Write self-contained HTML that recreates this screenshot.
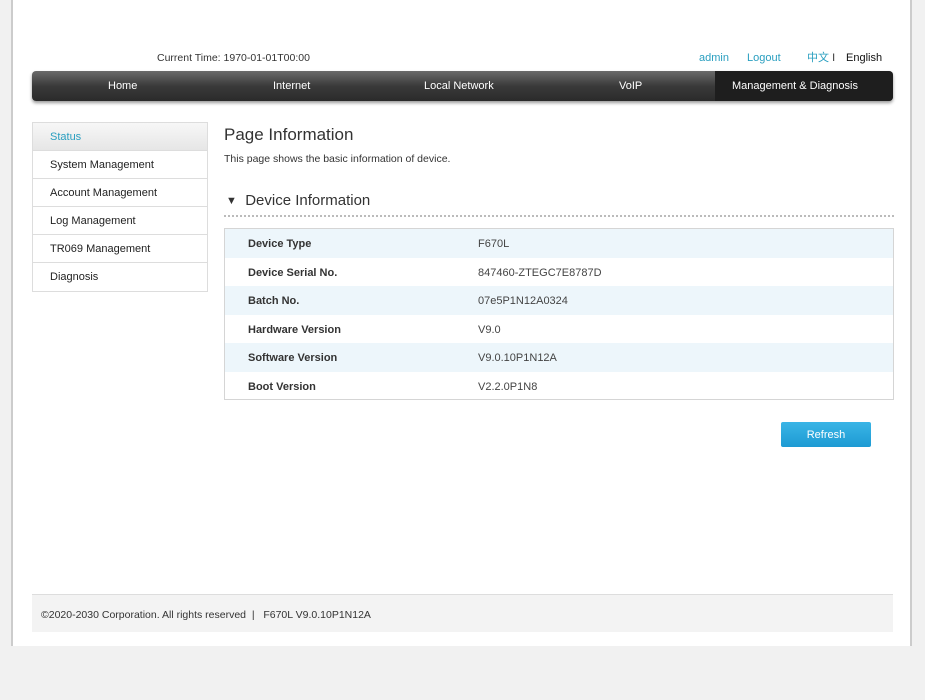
<!DOCTYPE html>
<html><head><meta charset="utf-8"><style>
*{margin:0;padding:0;box-sizing:border-box}
body{width:925px;height:700px;background:#f1f1f1;font-family:"Liberation Sans","Noto Sans CJK SC",sans-serif;position:relative;overflow:hidden;color:#333}
.panel{position:absolute;left:11px;top:0;width:901px;height:646px;background:#fff;border-left:2px solid #ccc;border-right:2px solid #ccc}
.abs{position:absolute;white-space:nowrap;line-height:14px}
.nav{position:absolute;left:32px;top:71px;width:861px;height:30px;border-radius:4px;background:linear-gradient(#6a6a6a,#3a3a3a 50%,#2a2a2a);box-shadow:0 2px 3px #999;color:#fff;font-size:11px}
.nav span{position:absolute;top:9px}
.act{position:absolute;left:683px;top:0;width:178px;height:30px;background:#1e1e1e;border-radius:0 4px 4px 0}
.side{position:absolute;left:32px;top:122px;width:176px;border:1px solid #ddd}
.side div{height:28px;line-height:29px;padding-left:17px;font-size:11px;border-bottom:1px solid #ddd;color:#222}
.side div:last-child{border-bottom:0}
.tbl{position:absolute;left:224px;top:228px;width:670px;height:172px;border:1px solid #d5d5d5}
.tbl div{height:28.5px;position:relative;font-size:11px}
.tbl div:nth-child(odd){background:#edf6fb}
.tbl b{position:absolute;left:23px;top:9px;color:#333}
.tbl span{position:absolute;left:253px;top:9px;color:#444}
</style></head><body>
<div class="panel"></div>
<div class="abs" style="left:157px;top:51px;font-size:10.5px">Current Time: 1970-01-01T00:00</div>
<div class="abs" style="left:699px;top:51px;font-size:11px;color:#2a9fc0">admin</div>
<div class="abs" style="left:747px;top:51px;font-size:11px;color:#2a9fc0">Logout</div>
<div class="abs" style="left:807px;top:51px;font-size:11px;color:#2a9fc0">中文 <span style="color:#333">I</span></div>
<div class="abs" style="left:846px;top:51px;font-size:11px;color:#111">English</div>
<div class="nav"><div class="act"></div>
<span style="left:76px">Home</span><span style="left:241px">Internet</span><span style="left:392px">Local Network</span><span style="left:587px">VoIP</span><span style="left:700px">Management &amp; Diagnosis</span></div>
<div class="side">
<div style="background:linear-gradient(#f7f7f7,#e6e6e6);color:#2a9fc0">Status</div>
<div>System Management</div><div>Account Management</div><div>Log Management</div><div>TR069 Management</div><div>Diagnosis</div>
</div>
<div class="abs" style="left:224px;top:126px;font-size:17px;line-height:18px;color:#333">Page Information</div>
<div class="abs" style="left:224px;top:152px;font-size:10.5px;color:#333">This page shows the basic information of device.</div>
<div class="abs" style="left:226px;top:193px;font-size:15px;line-height:16px;color:#333"><span style="font-size:11px;position:relative;top:-1px">▼</span>&nbsp; Device Information</div>
<div class="abs" style="left:224px;top:215px;width:670px;border-top:2px dotted #bbb"></div>
<div class="tbl">
<div><b>Device Type</b><span>F670L</span></div>
<div><b>Device Serial No.</b><span>847460-ZTEGC7E8787D</span></div>
<div><b>Batch No.</b><span>07e5P1N12A0324</span></div>
<div><b>Hardware Version</b><span>V9.0</span></div>
<div><b>Software Version</b><span>V9.0.10P1N12A</span></div>
<div><b>Boot Version</b><span>V2.2.0P1N8</span></div>
</div>
<div class="abs" style="left:781px;top:422px;width:90px;height:25px;background:linear-gradient(#3ab5e6,#1d9ad3);border-radius:2px;color:#fff;font-size:11px;text-align:center;line-height:27px">Refresh</div>
<div class="abs" style="left:32px;top:594px;width:861px;height:38px;background:#f3f3f3;border-top:1px solid #ddd;font-size:10.5px;line-height:40px;padding-left:9px;color:#333">©2020-2030 Corporation. All rights reserved &nbsp;| &nbsp; F670L V9.0.10P1N12A</div>
</body></html>
